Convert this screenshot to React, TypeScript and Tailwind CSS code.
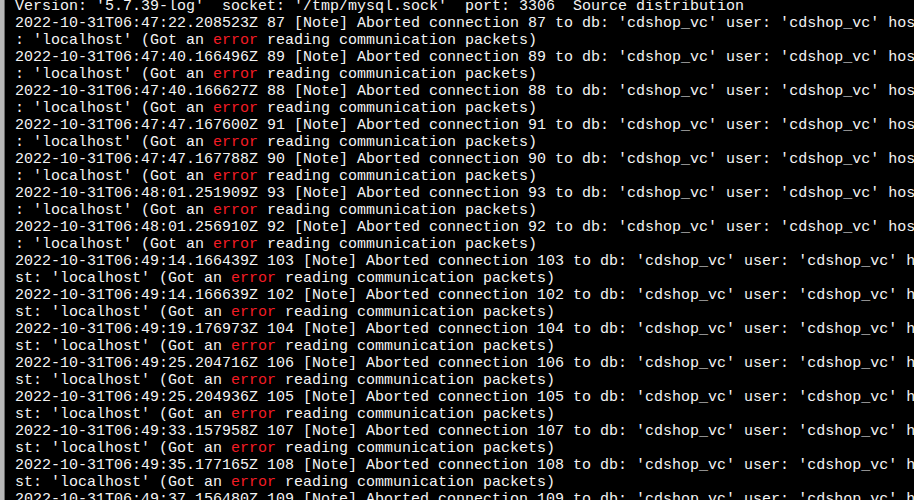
import React from 'react';

type Entry = { time: string; id: number };

// mysql error log entries shown in the console
const entries: Entry[] = [
  { time: '06:47:22.208523Z', id: 87 },
  { time: '06:47:40.166496Z', id: 89 },
  { time: '06:47:40.166627Z', id: 88 },
  { time: '06:47:47.167600Z', id: 91 },
  { time: '06:47:47.167788Z', id: 90 },
  { time: '06:48:01.251909Z', id: 93 },
  { time: '06:48:01.256910Z', id: 92 },
  { time: '06:49:14.166439Z', id: 103 },
  { time: '06:49:14.166639Z', id: 102 },
  { time: '06:49:19.176973Z', id: 104 },
  { time: '06:49:25.204716Z', id: 106 },
  { time: '06:49:25.204936Z', id: 105 },
  { time: '06:49:33.157958Z', id: 107 },
  { time: '06:49:35.177165Z', id: 108 },
  { time: '06:49:37.156480Z', id: 109 },
];

const COLS = 101;

// split a log entry into the terminal's 101-column rows
const wrap = (e: Entry) => {
  const full = `2022-10-31T${e.time} ${e.id} [Note] Aborted connection ${e.id} to db: 'cdshop_vc' user: 'cdshop_vc' host: 'localhost' (Got an error reading communication packets)`;
  return [full.slice(0, COLS), full.slice(COLS)];
};

const Line: React.FC<{ text: string }> = ({ text }) => {
  const i = text.indexOf('error');
  if (i < 0) return <div className="h-[17px] whitespace-pre">{text}</div>;
  return (
    <div className="h-[17px] whitespace-pre">
      {text.slice(0, i)}
      <span className="text-[#f21c24]">error</span>
      {text.slice(i + 5)}
    </div>
  );
};

export default function App() {
  return (
    <div className="flex h-[500px] w-[914px] overflow-hidden bg-black">
      <div className="w-[4px] shrink-0 bg-[#b8b8b8]" />
      <div className="w-[1px] shrink-0 bg-[#6a6a6a]" />
      <div
        className="flex-1 overflow-hidden pl-[10px] text-[15px] leading-[17px] text-[#f4f4f4]"
        style={{ fontFamily: '"Liberation Mono", "Courier New", monospace' }}
      >
        <div className="-mt-[2px]">
          <Line text="Version: '5.7.39-log'  socket: '/tmp/mysql.sock'  port: 3306  Source distribution" />
          {entries.map((e) => {
            const [a, b] = wrap(e);
            return (
              <React.Fragment key={e.time + e.id}>
                <Line text={a} />
                <Line text={b} />
              </React.Fragment>
            );
          })}
        </div>
      </div>
    </div>
  );
}
